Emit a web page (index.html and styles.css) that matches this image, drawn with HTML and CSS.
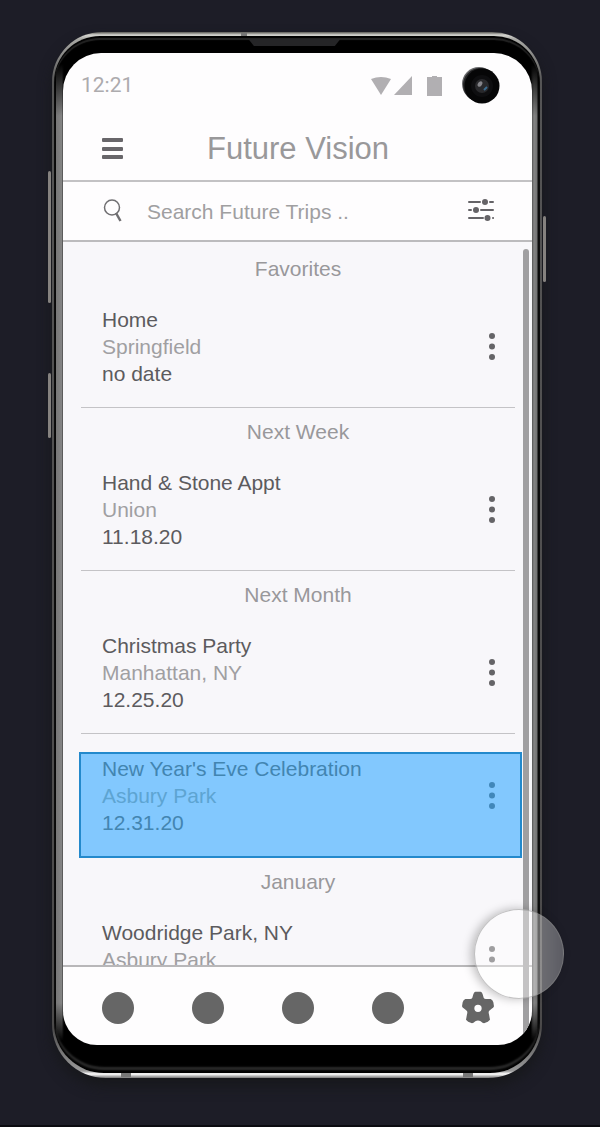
FILE: index.html
```html
<!DOCTYPE html>
<html lang="en">
<head>
<meta charset="utf-8">
<meta name="viewport" content="width=device-width, initial-scale=1">
<title>Future Vision</title>
<link rel="stylesheet" href="styles.css">
</head>
<body>
<svg class="defs" aria-hidden="true">
  <symbol id="more" viewBox="0 0 8 29"><circle cx="5" cy="4" r="3"/><circle cx="5" cy="14.500" r="3"/><circle cx="5" cy="25" r="3"/></symbol>
</svg>
<div class="phone">
  <span class="key key-volume"></span>
  <span class="key key-assist"></span>
  <span class="key key-power"></span>
  <span class="seam seam-top"></span>
  <span class="seam seam-bottom-left"></span>
  <span class="seam seam-bottom-right"></span>
  <div class="bezel">
    <span class="speaker"></span>
    <div class="screen">
      <div class="status">
        <span class="time">12:21</span>
        <svg class="signals" viewBox="0 0 72 20" aria-hidden="true">
          <path d="M0 3Q10-1 20 3L10 19Z"/><path d="M41 0V19H23Z"/><path d="M56 1H61V0H66V1H71V20H56Z"/>
        </svg>
        <svg class="camera" viewBox="0 0 38 38" aria-hidden="true">
          <circle cx="17" cy="17" r="17" fill="#68686a"/><circle cx="18" cy="18" r="17" fill="#242426"/>
          <circle cx="20" cy="19" r="17.500" fill="#060607"/><circle cx="20" cy="19" r="11" fill="#0e0e10"/>
          <circle cx="20" cy="19" r="7" fill="#29292c"/><ellipse cx="18" cy="17" rx="2" ry="3" fill="#85858a" transform="rotate(35 18 17)"/><path d="M22 23l3-3" stroke="#3c6d91" stroke-width="2"/>
        </svg>
      </div>
      <header class="header">
        <button class="icon-button" aria-label="Menu"><svg width="22" height="22" viewBox="0 0 22 22" fill="#68666a"><rect y="0" width="21" height="4" rx="1"/><rect y="9" width="21" height="4" rx="1"/><rect y="17" width="21" height="4" rx="1"/></svg></button>
        <h1 class="title">Future Vision</h1>
      </header>
      <form class="search">
        <label for="trip-search" aria-label="Search"><svg class="lens" width="20" height="24" viewBox="0 0 20 24" fill="none" stroke="#706f72"><circle cx="9" cy="8.500" r="7.500" stroke-width="1.500"/><path d="M13 14L17.500 22" stroke-width="2.500"/></svg></label>
        <input id="trip-search" class="search-input" type="text" placeholder="Search Future Trips ..">
        <button class="icon-button" type="button" aria-label="Filters"><svg width="28" height="24" viewBox="0 0 28 24" stroke="#656367" fill="#656367" stroke-width="2" stroke-linecap="round"><path d="M2 3H13M23 3H26M2 11H4M14 11H26M2 19H16M26 19H26.100"/><g stroke="none"><circle cx="18" cy="3" r="3"/><circle cx="9" cy="11" r="3"/><circle cx="20.500" cy="19" r="3"/></g></svg></button>
      </form>
      <main class="trips">
        <section class="group">
          <h2 class="group-title">Favorites</h2>
          <article class="trip"><div class="details"><h3 class="name">Home</h3><p class="place">Springfield</p><p class="date">no date</p></div><button class="icon-button more" aria-label="Options for Home"><svg width="8" height="29"><use href="#more"/></svg></button></article>
        </section>
        <section class="group">
          <h2 class="group-title">Next Week</h2>
          <article class="trip"><div class="details"><h3 class="name">Hand &amp; Stone Appt</h3><p class="place">Union</p><p class="date">11.18.20</p></div><button class="icon-button more" aria-label="Options for Hand &amp; Stone Appt"><svg width="8" height="29"><use href="#more"/></svg></button></article>
        </section>
        <section class="group">
          <h2 class="group-title">Next Month</h2>
          <article class="trip"><div class="details"><h3 class="name">Christmas Party</h3><p class="place">Manhattan, NY</p><p class="date">12.25.20</p></div><button class="icon-button more" aria-label="Options for Christmas Party"><svg width="8" height="29"><use href="#more"/></svg></button></article>
        </section>
        <article class="trip selected"><div class="details"><h3 class="name">New Year's Eve Celebration</h3><p class="place">Asbury Park</p><p class="date">12.31.20</p></div><button class="icon-button more" aria-label="Options for New Year's Eve Celebration"><svg width="8" height="29"><use href="#more"/></svg></button></article>
        <section class="group">
          <h2 class="group-title">January</h2>
          <article class="trip"><div class="details"><h3 class="name">Woodridge Park, NY</h3><p class="place">Asbury Park</p></div><button class="icon-button more" aria-label="Options for Woodridge Park"><svg width="8" height="29"><use href="#more"/></svg></button></article>
        </section>
      </main>
      <nav class="tabs">
        <button class="tab dot" aria-label="Tab 1"></button>
        <button class="tab dot" aria-label="Tab 2"></button>
        <button class="tab dot" aria-label="Tab 3"></button>
        <button class="tab dot" aria-label="Tab 4"></button>
        <button class="tab" aria-label="Settings"><svg width="32" height="33" viewBox="0 0 96 99"><path fill="#666" fill-rule="evenodd" d="M40 2H56Q60 3 62 10L65 20Q67 25 74 24L86 24Q92 26 94 34L96 46Q96 50 88 54L81 60Q79 64 81 70L84 86Q80 92 66 97Q62 97 56 91Q48 86 40 91Q34 97 30 97Q16 92 12 86L15 70Q17 64 15 60L8 54Q0 50 0 46L2 34Q4 26 10 24L22 24Q29 25 31 20L34 10Q36 3 40 2ZM48 41A11 11 0 1 0 48 63A11 11 0 1 0 48 41Z"/></svg></button>
      </nav>
      <span class="scrollbar"></span>
    </div>
  </div>
  <span class="touch"></span>
</div>
</body>
</html>
```
FILE: styles.css
```css
* { box-sizing: border-box; }

body {
  margin: 0;
  height: 100vh;
  padding: 32px 58px 47px 52px;
  border-bottom: 2px solid #0b0b10;
  background: #1d1d27;
  font-family: "Liberation Sans", Arial, sans-serif;
  font-size: 21px;
  line-height: 27px;
  color: #5c5b5e;
}

h1, h2, h3, p { margin: 0; font: inherit; }
button { padding: 0; border: 0; background: none; cursor: pointer; }
svg { display: block; }
.defs { position: absolute; width: 0; height: 0; }

.phone {
  position: relative;
  display: flex;
  height: 100%;
  padding: 4px 2px 5px;
  border-radius: 50px 50px 54px 54px;
  background: linear-gradient(#5a5955, #d5d5d0 3px, #a8a8a4 7px, #555 50px, #4b4a4a calc(100% - 50px), #999 calc(100% - 7px), #fff calc(100% - 4px), #777);
  box-shadow: 0 8px 14px #17181b;
}

.bezel {
  position: relative;
  flex: 1;
  min-width: 0;
  padding: 17px 8px 28px 9px;
  border-radius: 46px 46px 50px 50px;
  background:
    linear-gradient(#000 28px, transparent 80px, transparent calc(100% - 70px), #000 calc(100% - 32px)),
    linear-gradient(90deg, #080808 2px, #777 2px, #858585 8px, #333 9px, #000 10px, #000 calc(100% - 9px), #555 calc(100% - 8px), #858585 calc(100% - 6px), #737373 calc(100% - 3px), #0b0b0b calc(100% - 2px));
  box-shadow: inset 0 -3px 2px #000, inset 0 -6px 2px #2c2c2c, inset 0 2px 1px #000, inset 0 4px 1px #252525;
}

.screen {
  position: relative;
  display: flex;
  flex-direction: column;
  height: 100%;
  overflow: hidden;
  border-radius: 38px 38px 34px 34px;
  background: #fefdfe;
}

.status {
  display: flex;
  align-items: center;
  height: 65px;
  padding: 0 32px 0 18px;
}
.time { flex: 1; font-family: Roboto, sans-serif; color: #adabae; }
.signals { width: 72px; height: 20px; margin-right: 19px; fill: #b1afb2; }
.camera { width: 38px; height: 38px; }

.header {
  display: grid;
  grid-template-columns: 22px 1fr 22px;
  align-items: center;
  height: 64px;
  padding: 0 38px 0 39px;
  border-bottom: 2px solid #c3c2c4;
}
.title { text-align: center; font-size: 31px; line-height: 36px; color: #99989a; }

.search {
  display: flex;
  align-items: center;
  height: 60px;
  padding: 0 37px 0 40px;
  border-bottom: 2px solid #bcbbbd;
}
.search-input {
  flex: 1;
  min-width: 0;
  margin: 0 0 0 24px;
  padding: 0;
  border: 0;
  outline: 0;
  background: none;
  font: inherit;
  color: #555457;
}
.search-input::placeholder { color: #a09fa1; opacity: 1; }

.trips {
  flex: 1;
  min-height: 0;
  overflow: hidden;
  padding: 3px 10px 0 16px;
  background: #f8f7fa;
}
.group { margin: 0 7px 0 2px; padding-top: 10px; border-bottom: 1px solid #c4c3c6; }
.group-title { text-align: center; color: #99989b; }
.trip {
  display: flex;
  align-items: center;
  justify-content: space-between;
  padding: 24px 18px 20px 21px;
}
.details { min-height: 81px; }
.place { color: #a09fa2; }
.more { fill: #656467; padding: 0 2px; }

.selected {
  margin: 18px 0 0;
  padding: 1px 23px 20px 21px;
  border: 2px solid #2389cc;
  background: #82c8fe;
  color: #4285b1;
}
.selected .place { color: #5da4d2; }
.selected .more { fill: #4187b9; }

.tabs {
  display: flex;
  align-items: center;
  justify-content: space-between;
  height: 80px;
  padding: 3px 38px 0 39px;
  border-top: 2px solid #b8b7b9;
}
.tab { width: 32px; }
.dot { height: 32px; border-radius: 50%; background: #666; }

.scrollbar {
  position: absolute;
  top: 196px;
  right: 3px;
  bottom: 0;
  width: 6px;
  border-radius: 3px 3px 0 0;
  background: #a09fa1;
}

.touch {
  position: absolute;
  right: -22px;
  bottom: 79px;
  width: 90px;
  height: 90px;
  border: 1px solid #88888880;
  border-radius: 50%;
  background: linear-gradient(90deg, #ffffff60 55%, #ffffff60 72%, #ffffff48 100%);
  box-shadow: -3px 0 10px #00000040;
}

.key { position: absolute; width: 3px; background: #85827f; border-radius: 2px; }
.key-volume { left: -4px; top: 139px; height: 132px; }
.key-assist { left: -4px; top: 341px; height: 65px; }
.key-power { right: -4px; top: 184px; height: 66px; }

.seam { position: absolute; height: 4px; background: #777; }
.seam-top { top: 1px; left: 189px; width: 6px; }
.seam-bottom-left { bottom: 1px; left: 69px; width: 10px; }
.seam-bottom-right { bottom: 1px; right: 69px; width: 10px; }

.speaker {
  position: absolute;
  top: 3px;
  left: 40%;
  width: 92px;
  height: 7px;
  background: #252527;
  clip-path: polygon(0 0, 100% 0, 94% 100%, 6% 100%);
}
```
